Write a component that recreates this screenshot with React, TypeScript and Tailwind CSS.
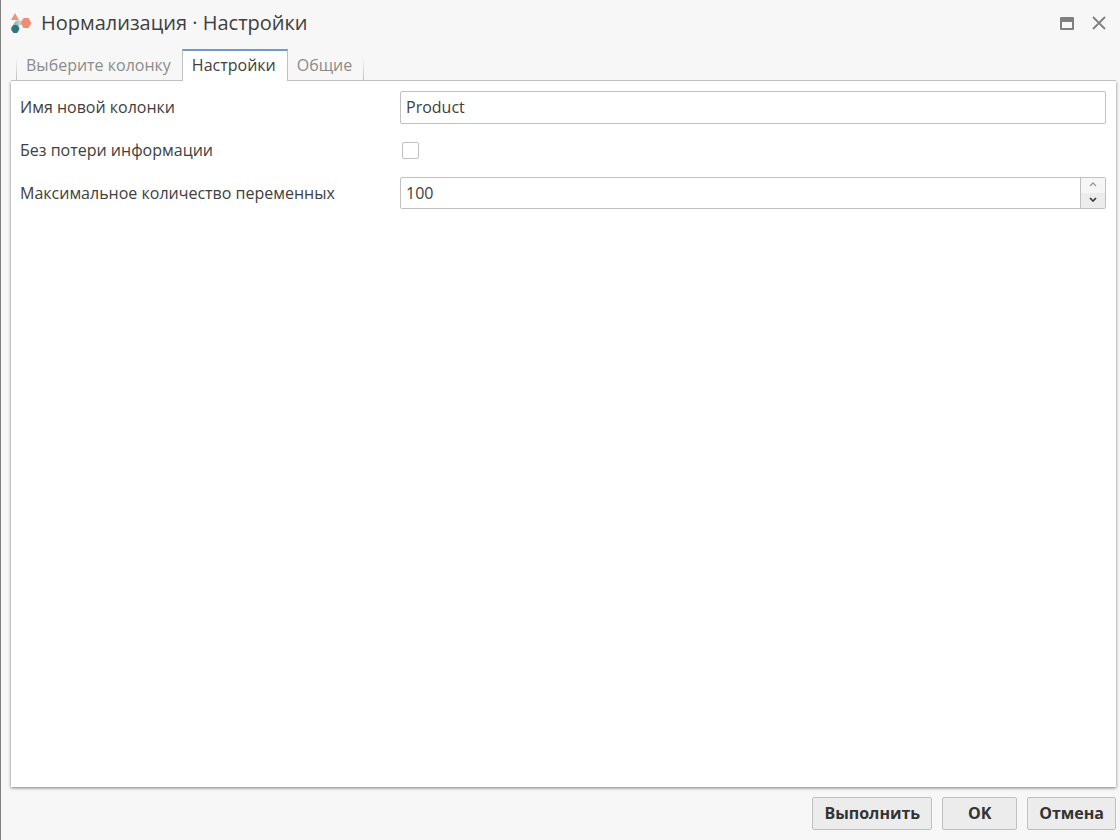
import React, { useState } from "react";
import clsx from "clsx";

const tabs = ["Выберите колонку", "Настройки", "Общие"];

const NodeIcon = () => (
  <svg width="22" height="22" viewBox="0 0 22 22" aria-hidden="true">
    <defs>
      <linearGradient id="link" x1="0" y1="0" x2="1" y2="0">
        <stop offset="0" stopColor="#35737b" />
        <stop offset="1" stopColor="#d5e3e5" />
      </linearGradient>
    </defs>
    <path d="M3 13 6 8.500H14V13H10L6 17Z" fill="url(#link)" opacity=".6" />
    <path d="M5 1 9 8H1Z" fill="#f0937a" />
    <path d="M13.500 6h5l2.800 5-2.800 5h-5l-2.800-5Z" fill="#f28b70" />
    <path d="M3.500 13h3.500l2.200 2.500v2.500l-2.200 3H3.500l-2.200-3v-2.500Z" fill="#35737b" />
  </svg>
);

const Header = () => (
  <header className="flex h-12 items-center justify-between pr-[13px] pb-[2px] pl-[9px]">
    <div className="flex items-center gap-[9px]">
      <NodeIcon />
      <h1 className="text-[20px] leading-7">Нормализация · Настройки</h1>
    </div>
    <div className="flex items-center gap-4">
      <button type="button" aria-label="Развернуть">
        <svg width="16" height="14" viewBox="0 0 16 14">
          <path
            fill="#808080"
            fillRule="evenodd"
            d="M2 1h12a1 1 0 0 1 1 1v11a1 1 0 0 1-1 1H2a1 1 0 0 1-1-1V2a1 1 0 0 1 1-1ZM3 6v6h10V6Z"
          />
        </svg>
      </button>
      <button type="button" aria-label="Закрыть">
        <svg width="16" height="14" viewBox="0 0 16 14">
          <path d="m2 1 12 12M14 1 2 13" stroke="#808080" strokeWidth="1.8" />
        </svg>
      </button>
    </div>
  </header>
);

const Tabs = ({
  active,
  onChange,
}: {
  active: number;
  onChange: (index: number) => void;
}) => (
  <div className="mr-1 ml-[10px] flex h-[33px] items-stretch" role="tablist">
    <div className="w-[5px] border-b border-[#c0c0c0]" />
    <div className="w-px border-b border-[#c0c0c0] bg-linear-to-b from-transparent from-30% to-[#c0c0c0]" />
    {tabs.map((tab, index) => (
      <button
        key={tab}
        type="button"
        role="tab"
        aria-selected={active === index}
        onClick={() => onChange(index)}
        className={clsx(
          "mt-px pr-[11px] pl-[9px] leading-6",
          active === index
            ? "border-x border-t-2 border-x-[#c0c0c0] border-t-[#6f9bc6] bg-white pb-[2px] text-[#404040]"
            : "border-b border-[#c0c0c0] pt-px text-[#8c8c8c]",
        )}
      >
        {tab}
      </button>
    ))}
    <div className="w-px border-b border-[#c0c0c0] bg-linear-to-b from-transparent from-30% to-[#c0c0c0]" />
    <div className="flex-1 border-b border-[#c0c0c0]" />
  </div>
);

const Row = ({
  id,
  label,
  children,
}: {
  id: string;
  label: string;
  children: React.ReactNode;
}) => (
  <div className="flex items-center">
    <label htmlFor={id} className="w-[380px] shrink-0 pb-px leading-6">
      {label}
    </label>
    {children}
  </div>
);

const FooterButton = ({
  className,
  children,
}: {
  className?: string;
  children: React.ReactNode;
}) => (
  <button
    type="button"
    className={clsx(
      "h-[33px] rounded-xs border border-[#c0c0c0] bg-[#ececec] px-[11px] pb-[2px] font-bold text-[#333333]",
      className,
    )}
  >
    {children}
  </button>
);

const App = () => {
  const [active, setActive] = useState(1);
  const [name, setName] = useState("Product");
  const [lossless, setLossless] = useState(false);
  const [limit, setLimit] = useState("100");

  const step = (delta: number) => setLimit(String(Number(limit) + delta));

  return (
    <div className="flex min-h-screen flex-col border-l border-[#808080] bg-[#f7f7f7] font-['Open_Sans','Noto_Sans',sans-serif] text-[16px] text-[#404040]">
      <Header />
      <Tabs active={active} onChange={setActive} />
      <main className="mr-1 ml-[10px] flex flex-1 flex-col gap-[10px] bg-white py-[10px] pr-[10px] pl-[9px] shadow-[0_1px_3px_rgba(0,0,0,0.5)] [clip-path:inset(0_-6px_-6px_-6px)]">
        {active === 1 && (
          <>
            <Row id="name" label="Имя новой колонки">
              <input
                id="name"
                type="text"
                value={name}
                onChange={(e) => setName(e.target.value)}
                className="h-[33px] min-w-0 flex-1 rounded-xs border border-[#c0c0c0] px-[5px] pb-[2px] outline-none"
              />
            </Row>
            <Row id="lossless" label="Без потери информации">
              <div className="flex h-[33px] items-center pl-[2px]">
                <input
                  id="lossless"
                  type="checkbox"
                  checked={lossless}
                  onChange={(e) => setLossless(e.target.checked)}
                  className="size-[17px] appearance-none rounded-xs border border-[#c0c0c0] bg-white checked:bg-[#6f9bc6]"
                />
              </div>
            </Row>
            <Row id="limit" label="Максимальное количество переменных">
              <div className="flex h-8 min-w-0 flex-1 overflow-hidden rounded-xs border border-[#c0c0c0]">
                <input
                  id="limit"
                  type="text"
                  inputMode="numeric"
                  value={limit}
                  onChange={(e) => setLimit(e.target.value)}
                  className="min-w-0 flex-1 px-[5px] outline-none"
                />
                <div className="flex w-[25px] flex-col border-l border-[#c0c0c0]">
                  <button
                    type="button"
                    aria-label="Увеличить"
                    onClick={() => step(1)}
                    className="flex flex-1 items-center justify-center bg-[#f6f6f6] pb-[2px]"
                  >
                    <svg width="8" height="5" viewBox="0 0 8 5" fill="none">
                      <path d="m1 4 3-3 3 3" stroke="#999999" strokeWidth="1.3" />
                    </svg>
                  </button>
                  <button
                    type="button"
                    aria-label="Уменьшить"
                    onClick={() => step(-1)}
                    className="flex flex-1 items-center justify-center bg-[#ececec] pb-[2px]"
                  >
                    <svg width="8" height="5" viewBox="0 0 8 5" fill="none">
                      <path d="m1 1 3 3 3-3" stroke="#333333" strokeWidth="1.6" />
                    </svg>
                  </button>
                </div>
              </div>
            </Row>
          </>
        )}
      </main>
      <footer className="flex justify-end gap-[10px] pt-[10px] pr-1 pb-[10px]">
        <FooterButton>Выполнить</FooterButton>
        <FooterButton className="min-w-[75px]">OK</FooterButton>
        <FooterButton>Отмена</FooterButton>
      </footer>
    </div>
  );
};

export default App;
